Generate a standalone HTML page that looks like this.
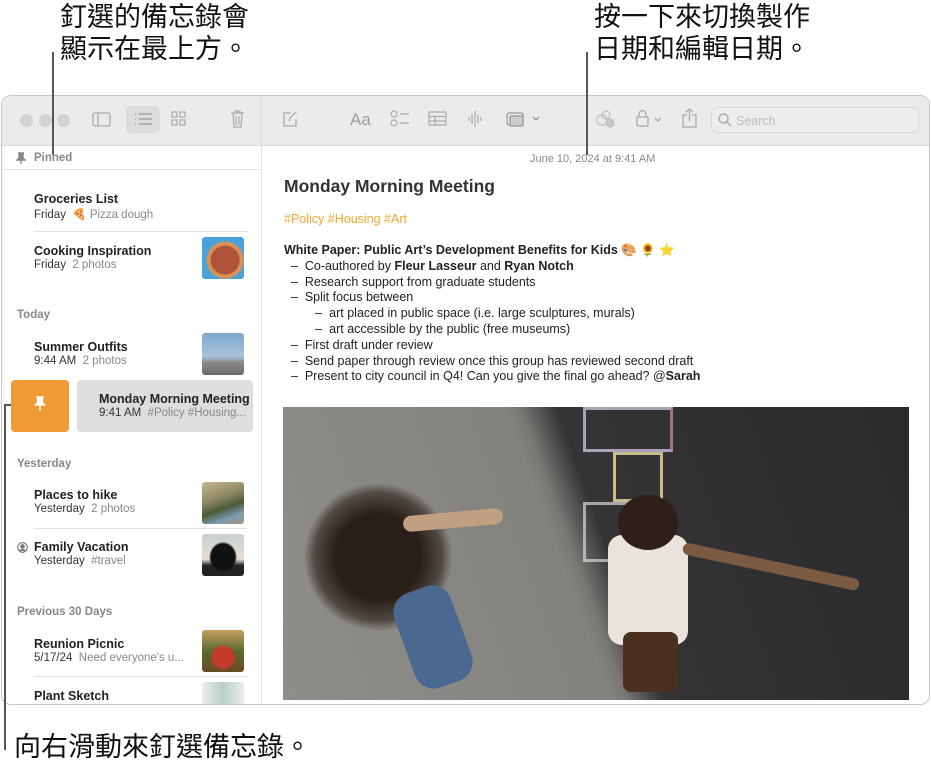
<!DOCTYPE html>
<html><head><meta charset="utf-8"><style>
*{margin:0;padding:0;box-sizing:border-box}
body{width:931px;height:771px;background:#fff;position:relative;overflow:hidden;font-family:"Liberation Sans","Noto Sans CJK TC",sans-serif;color:#222}
.a{position:absolute}
.cjk{font-family:"Liberation Sans","Noto Sans CJK TC",sans-serif;font-size:27px;line-height:32px;color:#111}
.win{left:1px;top:95px;width:929px;height:610px;border:1px solid #c8c8c8;border-radius:10px;overflow:hidden;background:#fff}
.tb{left:0;top:0;width:927px;height:50px;background:#ebebeb;border-bottom:1px solid #dadada}
.dot{width:13px;height:13px;border-radius:50%;background:#d3d3d3;top:18px}
.ic{color:#a0a0a0;font-size:17px}
.t{font-weight:bold;font-size:12.5px;color:#222}
.s{font-size:11.5px;color:#333}
.g{color:#888}
.h{font-size:11.5px;color:#888;font-weight:bold}
.sep{height:1px;background:#e2e2e2}
.th{width:42px;height:42px;border-radius:3px}
.n{font-size:12.5px;color:#222;line-height:15.8px}
</style></head><body>
<div class="a cjk" style="left:60px;top:1px">釘選的備忘錄會<br>顯示在最上方。</div>
<div class="a cjk" style="left:594px;top:1px">按一下來切換製作<br>日期和編輯日期。</div>
<div class="a cjk" style="left:14px;top:731px">向右滑動來釘選備忘錄。</div>

<div class="a win">
 <div class="a tb">
  <div class="a dot" style="left:18px"></div><div class="a dot" style="left:37px"></div><div class="a dot" style="left:55px"></div>
  <svg class="a" style="left:90px;top:16px" width="19" height="16"><rect x="1" y="1" width="17" height="13" rx="2" fill="none" stroke="#aaa" stroke-width="1.3"/><line x1="6" y1="1" x2="6" y2="14" stroke="#aaa" stroke-width="1.3"/></svg>
  <div class="a" style="left:124px;top:10px;width:34px;height:27px;border-radius:5px;background:#dcdcdc"></div>
  <svg class="a" style="left:132px;top:16px" width="19" height="15" stroke="#999" stroke-width="1.3"><line x1="5" y1="2" x2="18" y2="2"/><line x1="5" y1="7" x2="18" y2="7"/><line x1="5" y1="12" x2="18" y2="12"/><line x1="1" y1="2" x2="2" y2="2"/><line x1="1" y1="7" x2="2" y2="7"/><line x1="1" y1="12" x2="2" y2="12"/></svg>
  <svg class="a" style="left:169px;top:15px" width="16" height="16" fill="none" stroke="#aaa" stroke-width="1.2"><rect x="1" y="1" width="5" height="5"/><rect x="9" y="1" width="5" height="5"/><rect x="1" y="9" width="5" height="5"/><rect x="9" y="9" width="5" height="5"/></svg>
  <svg class="a" style="left:228px;top:14px" width="15" height="18" fill="none" stroke="#aaa" stroke-width="1.2"><line x1="1" y1="3" x2="14" y2="3"/><path d="M5 3V1h5v2M3 3l1 14h7l1-14M6 6v9M9 6v9"/></svg>
  <div class="a" style="left:259px;top:0;width:1px;height:50px;background:#dadada"></div>
  <svg class="a" style="left:280px;top:15px" width="16" height="16" fill="none" stroke="#aaa" stroke-width="1.3"><path d="M9 2H2v13h12V8"/><path d="M7 10l1-3 6-6"/></svg>
  <div class="a ic" style="left:348px;top:14px">Aa</div>
  <svg class="a" style="left:388px;top:14px" width="20" height="18" fill="none" stroke="#aaa" stroke-width="1.2"><circle cx="4" cy="4" r="3"/><circle cx="4" cy="13" r="3"/><line x1="10" y1="4" x2="19" y2="4"/><line x1="10" y1="13" x2="19" y2="13"/></svg>
  <svg class="a" style="left:426px;top:15px" width="19" height="16" fill="none" stroke="#aaa" stroke-width="1.2"><rect x="1" y="1" width="17" height="13" rx="1"/><line x1="1" y1="5.5" x2="18" y2="5.5"/><line x1="1" y1="10" x2="18" y2="10"/><line x1="7" y1="5.5" x2="7" y2="14"/></svg>
  <svg class="a" style="left:465px;top:14px" width="16" height="18" stroke="#aaa" stroke-width="1.2"><line x1="2" y1="7" x2="2" y2="11"/><line x1="5" y1="4" x2="5" y2="14"/><line x1="8" y1="1" x2="8" y2="17"/><line x1="11" y1="5" x2="11" y2="13"/><line x1="14" y1="7" x2="14" y2="11"/></svg>
  <svg class="a" style="left:504px;top:14px" width="36" height="18" fill="none" stroke="#999" stroke-width="1.3"><rect x="1" y="3" width="16" height="12" rx="2"/><rect x="4" y="6" width="13" height="10" rx="1" fill="#ccc"/><path d="M27 7l3 3 3-3"/></svg>
  <svg class="a" style="left:593px;top:13px" width="20" height="20" fill="none" stroke="#c0c0c0" stroke-width="1.2"><circle cx="7" cy="11" r="5"/><circle cx="11" cy="6" r="4"/><circle cx="15" cy="14" r="4" fill="#c8c8c8"/></svg>
  <svg class="a" style="left:634px;top:13px" width="30" height="20" fill="none" stroke="#aaa" stroke-width="1.3"><rect x="1" y="8" width="11" height="9" rx="1"/><path d="M3 8V5a3.5 3.5 0 017 0v3"/><path d="M19 9l3 3 3-3"/></svg>
  <svg class="a" style="left:680px;top:12px" width="15" height="20" fill="none" stroke="#aaa" stroke-width="1.3"><path d="M5 7H1v12h13V7h-4M7.5 13V1M4 4l3.5-3 3.5 3"/></svg>
  <div class="a" style="left:709px;top:11px;width:208px;height:26px;border:1px solid #dcdcdc;border-radius:6px;background:#ededed"></div>
  <svg class="a" style="left:716px;top:17px" width="14" height="14" fill="none" stroke="#aaa" stroke-width="1.4"><circle cx="5.5" cy="5.5" r="4.5"/><line x1="9" y1="9" x2="13" y2="13"/></svg>
  <div class="a" style="left:734px;top:18px;font-size:12.5px;color:#bbb">Search</div>
 </div>
 <div class="a" style="left:259px;top:50px;width:1px;height:560px;background:#e0e0e0"></div>

 <svg class="a" style="left:14px;top:56px" width="10" height="12"><path d="M2 1h6M3 1v5L1 8h8L7 6V1M5 8v4" stroke="#888" stroke-width="1.4" fill="#888"/></svg>
 <div class="a h" style="left:32px;top:56px">Pinned</div>
 <div class="a sep" style="left:0;top:73px;width:259px"></div>

 <div class="a t" style="left:32px;top:96px">Groceries List</div>
 <div class="a s" style="left:32px;top:111px">Friday &nbsp;<span class="g">🍕 Pizza dough</span></div>
 <div class="a sep" style="left:32px;top:135px;width:213px"></div>
 <div class="a t" style="left:32px;top:148px">Cooking Inspiration</div>
 <div class="a s" style="left:32px;top:163px">Friday &nbsp;<span class="g">2 photos</span></div>
 <div class="a th" style="left:200px;top:141px;background:radial-gradient(circle at 55% 55%,#b0533a 0 14px,#d79255 15px 18px,#4aa3d8 19px)"></div>

 <div class="a h" style="left:15px;top:213px">Today</div>
 <div class="a t" style="left:32px;top:244px">Summer Outfits</div>
 <div class="a s" style="left:32px;top:259px">9:44 AM &nbsp;<span class="g">2 photos</span></div>
 <div class="a th" style="left:200px;top:237px;background:linear-gradient(180deg,#7da7d2 0%,#a9c3da 55%,#8a8a8a 70%,#6a6a6a 100%)"></div>

 <div class="a" style="left:9px;top:284px;width:58px;height:52px;border-radius:4px;background:#f09a35"></div>
 <svg class="a" style="left:32px;top:300px" width="12" height="16"><path d="M2 1h8M3.5 1v6L1 9h10L8.5 7V1" fill="#fff" stroke="#fff" stroke-width="1.3"/><line x1="6" y1="9" x2="6" y2="15" stroke="#fff" stroke-width="1.5"/></svg>
 <div class="a" style="left:75px;top:284px;width:176px;height:52px;border-radius:4px;background:#dedede"></div>
 <div class="a t" style="left:97px;top:296px">Monday Morning Meeting</div>
 <div class="a s" style="left:97px;top:311px">9:41 AM &nbsp;<span class="g">#Policy #Housing...</span></div>

 <div class="a h" style="left:15px;top:362px">Yesterday</div>
 <div class="a t" style="left:32px;top:392px">Places to hike</div>
 <div class="a s" style="left:32px;top:407px">Yesterday &nbsp;<span class="g">2 photos</span></div>
 <div class="a th" style="left:200px;top:386px;background:linear-gradient(160deg,#c9b89a 0%,#8a8460 40%,#4b5a3a 60%,#7a9bb0 80%,#a89a7a 100%)"></div>
 <div class="a sep" style="left:32px;top:432px;width:213px"></div>
 <svg class="a" style="left:15px;top:446px" width="11" height="11" fill="none" stroke="#777" stroke-width="1.1"><circle cx="5.5" cy="5.5" r="4.8"/><circle cx="5.5" cy="4.5" r="1.8" fill="#777"/><path d="M2.5 9a3.5 3 0 016 0" fill="#777"/></svg>
 <div class="a t" style="left:32px;top:444px">Family Vacation</div>
 <div class="a s" style="left:32px;top:459px">Yesterday &nbsp;<span class="g">#travel</span></div>
 <div class="a th" style="left:200px;top:438px;background:radial-gradient(ellipse at 50% 55%,#111 0 12px,transparent 14px),linear-gradient(180deg,#c7cfd6 0%,#e8e0cc 60%,#222 75%)"></div>

 <div class="a h" style="left:15px;top:510px">Previous 30 Days</div>
 <div class="a t" style="left:32px;top:541px">Reunion Picnic</div>
 <div class="a s" style="left:32px;top:556px">5/17/24 &nbsp;<span class="g">Need everyone's u...</span></div>
 <div class="a th" style="left:200px;top:534px;background:radial-gradient(circle at 50% 65%,#c63a2a 0 10px,transparent 13px),linear-gradient(180deg,#c8a060 0%,#5a6a30 50%,#6a4a20 100%)"></div>
 <div class="a sep" style="left:32px;top:580px;width:213px"></div>
 <div class="a t" style="left:32px;top:593px">Plant Sketch</div>
 <div class="a th" style="left:200px;top:586px;background:linear-gradient(90deg,#e8efe8,#b8cfc8,#e8efe8)"></div>

 <div class="a" style="left:528px;top:57px;font-size:11px;color:#888">June 10, 2024 at 9:41 AM</div>
 <div class="a" style="left:282px;top:80px;font-size:17.5px;font-weight:bold;color:#333">Monday Morning Meeting</div>
 <div class="a" style="left:282px;top:116px;font-size:12.5px;color:#f0a830">#Policy #Housing #Art</div>
 <div class="a n" style="left:282px;top:147px">
  <b>White Paper: Public Art’s Development Benefits for Kids</b> 🎨 🌻 ⭐<br>
  &nbsp;&nbsp;–&nbsp;&nbsp;Co-authored by <b>Fleur Lasseur</b> and <b>Ryan Notch</b><br>
  &nbsp;&nbsp;–&nbsp;&nbsp;Research support from graduate students<br>
  &nbsp;&nbsp;–&nbsp;&nbsp;Split focus between<br>
  &nbsp;&nbsp;&nbsp;&nbsp;&nbsp;&nbsp;&nbsp;&nbsp;&nbsp;–&nbsp;&nbsp;art placed in public space (i.e. large sculptures, murals)<br>
  &nbsp;&nbsp;&nbsp;&nbsp;&nbsp;&nbsp;&nbsp;&nbsp;&nbsp;–&nbsp;&nbsp;art accessible by the public (free museums)<br>
  &nbsp;&nbsp;–&nbsp;&nbsp;First draft under review<br>
  &nbsp;&nbsp;–&nbsp;&nbsp;Send paper through review once this group has reviewed second draft<br>
  &nbsp;&nbsp;–&nbsp;&nbsp;Present to city council in Q4! Can you give the final go ahead? @<b>Sarah</b>
 </div>

 <div class="a" style="left:281px;top:311px;width:626px;height:300px;overflow:hidden;background:linear-gradient(70deg,#908e8a 0%,#84827e 45%,#7a7874 47%,#343436 52%,#2a2a2c 100%)">
  <div class="a" style="left:300px;top:0;width:90px;height:45px;border:3px solid #c8c0d8;border-right-color:#c08090;opacity:.8"></div>
  <div class="a" style="left:330px;top:45px;width:50px;height:50px;border:3px solid #e8e0a0;opacity:.8"></div>
  <div class="a" style="left:300px;top:95px;width:80px;height:60px;border:3px solid #d8d8d8;opacity:.7"></div>
  <div class="a" style="left:20px;top:75px;width:150px;height:150px;border-radius:50%;background:radial-gradient(ellipse,#2a1e18 40%,rgba(40,30,24,.6) 60%,transparent 70%)"></div>
  <div class="a" style="left:120px;top:105px;width:100px;height:16px;border-radius:8px;background:#c0a080;transform:rotate(-5deg)"></div>
  <div class="a" style="left:120px;top:180px;width:60px;height:100px;background:#4a6890;border-radius:20px;transform:rotate(-20deg)"></div>
  <div class="a" style="left:325px;top:128px;width:80px;height:110px;background:#e8e4dc;border-radius:14px"></div>
  <div class="a" style="left:335px;top:88px;width:60px;height:55px;border-radius:50%;background:#2e2018"></div>
  <div class="a" style="left:400px;top:135px;width:180px;height:12px;border-radius:6px;background:#7a5a40;transform:rotate(12deg);transform-origin:left"></div>
  <div class="a" style="left:340px;top:225px;width:55px;height:60px;background:#4a3020;border-radius:8px"></div>
  <div class="a" style="left:0;top:293px;width:626px;height:10px;background:#fff"></div>
 </div>
</div>

<div class="a" style="left:52px;top:52px;width:2px;height:103px;background:#555"></div>
<div class="a" style="left:586px;top:52px;width:2px;height:103px;background:#555"></div>
<div class="a" style="left:4px;top:404px;width:2px;height:346px;background:#555"></div>
<div class="a" style="left:4px;top:404px;width:7px;height:2px;background:#555"></div>
</body></html>
